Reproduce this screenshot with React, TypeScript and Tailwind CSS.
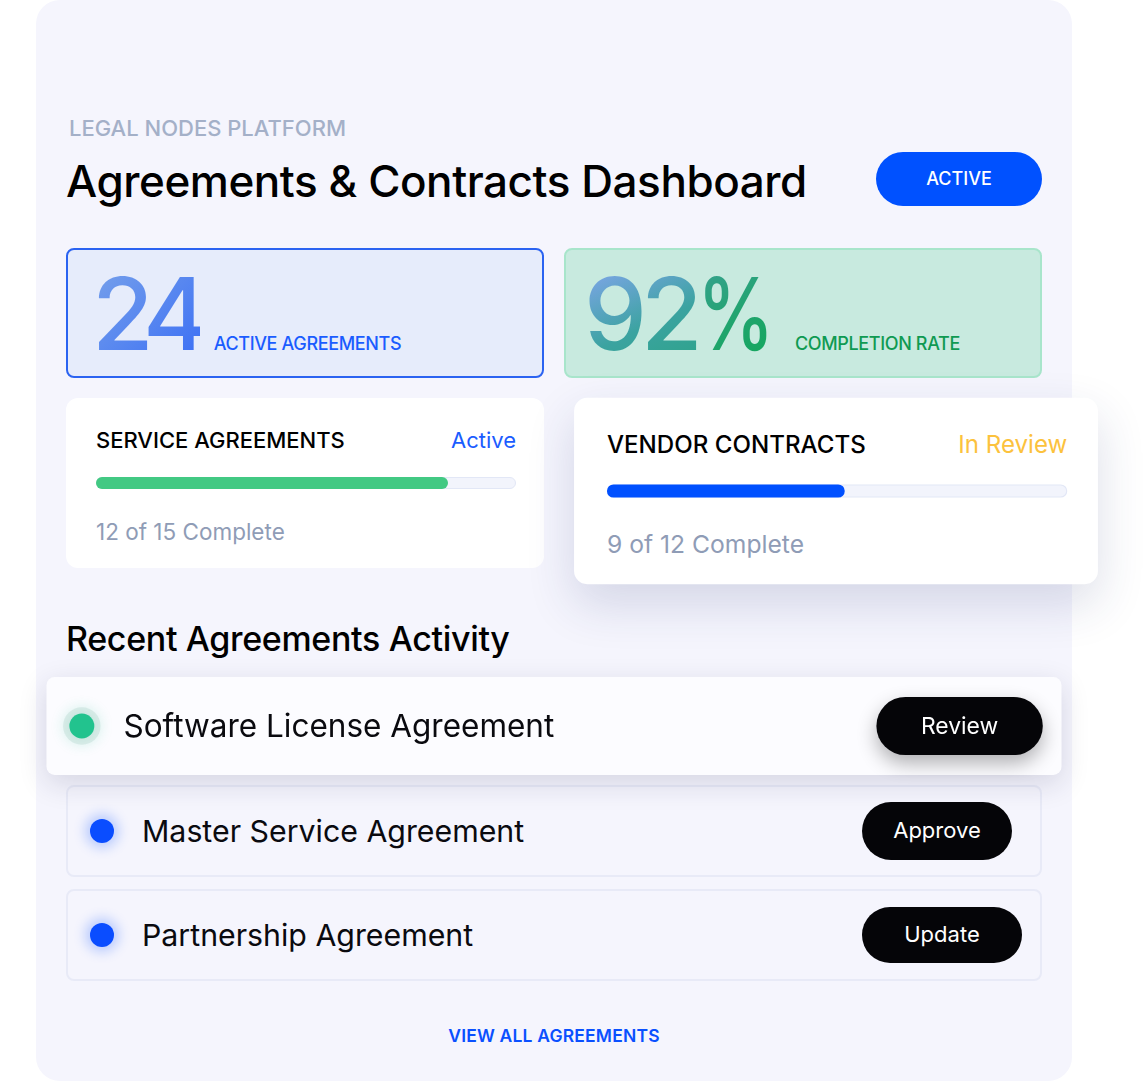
import React from "react";

const font = { fontFamily: "Inter, 'Noto Sans', sans-serif" };

function ProgressCard({
  title,
  status,
  statusClass,
  fillClass,
  pct,
  note,
  elevated,
}: {
  title: string;
  status: string;
  statusClass: string;
  fillClass: string;
  pct: number;
  note: string;
  elevated?: boolean;
}) {
  return (
    <div
      className={
        "h-[170px] rounded-[12px] bg-white pl-[30px] pr-[28px] pt-[29px] " +
        (elevated
          ? "translate-x-[33px] translate-y-[8px] scale-[1.096] shadow-[0_18px_44px_rgba(40,50,110,0.16)]"
          : "")
      }
    >
      <div className="flex items-baseline justify-between">
        <span className="text-[22px] font-medium leading-[26px] text-black">{title}</span>
        <span className={"text-[22px] leading-[26px] " + statusClass}>{status}</span>
      </div>
      <div className="mt-[24px] h-[12px] w-full rounded-full border border-[#e2e7f6] bg-[#f2f4fc]">
        <div className={"-m-px h-[12px] rounded-full " + fillClass} style={{ width: `${pct}%` }} />
      </div>
      <div className="mt-[30px] text-[22.5px] leading-[26px] text-[#8f9cb6]">{note}</div>
    </div>
  );
}

function Row({
  name,
  action,
  dot,
  highlighted,
  btnClass,
}: {
  name: string;
  action: string;
  dot: "green" | "blue";
  highlighted?: boolean;
  btnClass: string;
}) {
  return (
    <div
      className={
        "flex items-center rounded-[8px] pl-[22px] pr-[18px] " +
        (highlighted
          ? "h-[94px] scale-[1.04] bg-[#fcfcff] shadow-[0_8px_28px_rgba(30,30,70,0.14)]"
          : "h-[92px] border-2 border-[#e8eaf7] bg-[#f5f5fd]")
      }
    >
      <span
        className={
          "h-[24px] w-[24px] shrink-0 rounded-full " +
          (dot === "green"
            ? "bg-[#22c38e] shadow-[0_0_0_6px_rgba(170,205,195,0.3),0_0_12px_6px_rgba(34,195,142,0.18)]"
            : "bg-[#0a4dff] shadow-[0_0_12px_5px_rgba(40,100,255,0.28)]")
        }
      />
      <span className="ml-[28px] flex-1 text-[30.3px] leading-[36px] text-[#0a0a0f]">{name}</span>
      <div className="w-[160px] shrink-0">
        <button
          className={
            "flex items-center justify-center rounded-full bg-[#050508] text-[22px] text-white " +
            btnClass
          }
        >
          {action}
        </button>
      </div>
    </div>
  );
}

export default function App() {
  return (
    <div className="min-h-[1082px] bg-white" style={font}>
      <div className="ml-[36px] flex h-[1081px] w-[1036px] flex-col rounded-[24px] bg-[#f5f5fd] px-[30px] pt-[115px]">
        {/* Header */}
        <div className="flex items-end justify-between">
          <div>
            <div className="ml-[3px] text-[22px] font-medium leading-[26.6px] text-[#a4b0c8]">
              LEGAL NODES PLATFORM
            </div>
            <h1 className="mt-[13px] text-[44px] font-medium leading-[53px] tracking-[-0.01em] text-black">
              Agreements &amp; Contracts Dashboard
            </h1>
          </div>
          <button className="mb-[2px] flex h-[54px] w-[166px] items-center justify-center rounded-full bg-[#0051ff] text-[18px] font-medium text-white">
            ACTIVE
          </button>
        </div>

        {/* Stats */}
        <div className="mt-[40px] grid grid-cols-2 gap-[20px]">
          <div className="flex h-[130px] items-baseline rounded-[8px] border-2 border-[#2b63f1] bg-[#e6ecfb] pl-[24px] pt-[14px]">
            <span className="bg-[linear-gradient(135deg,#78a2ea,#3a6ef5)] bg-clip-text text-[100px] font-medium leading-[100px] tracking-[-0.09em] text-transparent">
              24
            </span>
            <span className="ml-[14px] text-[18px] font-medium tracking-[-0.02em] text-[#1a5cff]">
              ACTIVE AGREEMENTS
            </span>
          </div>
          <div className="flex h-[130px] items-baseline rounded-[8px] border-2 border-[#a8e5cb] bg-[#c8eadf] pl-[18px] pt-[14px]">
            <span className="bg-[linear-gradient(155deg,#80a5ea_5%,#3ba3a0_60%,#2ea38a_100%)] bg-clip-text text-[100px] font-medium leading-[100px] tracking-[-0.06em] text-transparent">
              92
            </span>
            <span className="mr-[-18px] inline-block origin-left scale-x-[0.78] bg-[linear-gradient(155deg,#3aa192_0%,#22a470_50%,#12a75a_100%)] bg-clip-text text-[100px] font-medium leading-[100px] text-transparent">
              %
            </span>
            <span className="ml-[17px] text-[18px] font-medium tracking-[-0.02em] text-[#0f9a52]">
              COMPLETION RATE
            </span>
          </div>
        </div>

        {/* Progress cards */}
        <div className="mt-[20px] grid grid-cols-2 gap-[20px]">
          <ProgressCard
            title="SERVICE AGREEMENTS"
            status="Active"
            statusClass="text-[#1a5cff]"
            fillClass="bg-[#42c983]"
            pct={84.3}
            note="12 of 15 Complete"
          />
          <ProgressCard
            title="VENDOR CONTRACTS"
            status="In Review"
            statusClass="text-[#fcc23d]"
            fillClass="bg-[#0050ff]"
            pct={52}
            note="9 of 12 Complete"
            elevated
          />
        </div>

        {/* Recent */}
        <h2 className="mt-[51px] text-[34px] font-medium leading-[39px] tracking-[-0.01em] text-black">
          Recent Agreements Activity
        </h2>
        <div className="mt-[21px] flex flex-col gap-[12px]">
          <Row
            name="Software License Agreement"
            action="Review"
            dot="green"
            highlighted
            btnClass="h-[56px] w-[160px] shadow-[0_8px_18px_rgba(0,0,0,0.3)]"
          />
          <Row name="Master Service Agreement" action="Approve" dot="blue" btnClass="h-[58px] w-[150px]" />
          <Row name="Partnership Agreement" action="Update" dot="blue" btnClass="h-[56px] w-[160px]" />
        </div>

        <div className="mt-[44px] text-center text-[17.5px] font-semibold leading-[21px] tracking-[0.01em] text-[#0a50ff]">
          VIEW ALL AGREEMENTS
        </div>
      </div>
    </div>
  );
}
